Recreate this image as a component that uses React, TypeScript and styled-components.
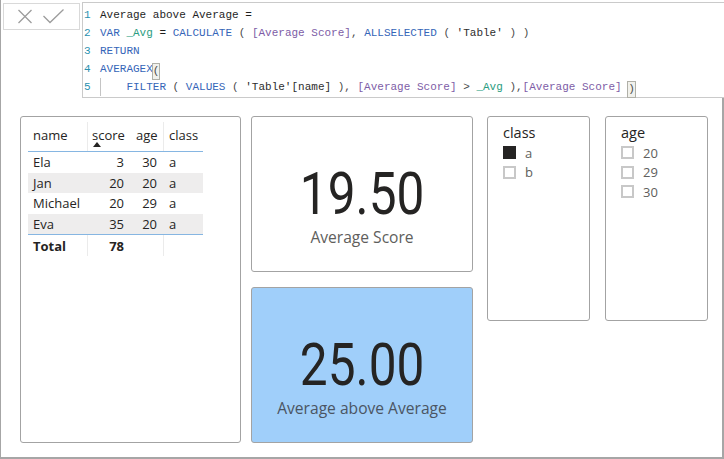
import React from "react";
import styled, { createGlobalStyle } from "styled-components";

const GlobalStyle = createGlobalStyle`
  html, body {
    margin: 0;
    padding: 0;
    background: #fff;
  }
  body {
    font-family: "Open Sans", "Noto Sans", sans-serif;
    color: #252423;
  }
`;

const Frame = styled.div`
  width: 724px;
  height: 459px;
  box-sizing: border-box;
  border-left: 1px solid #a6a6a6;
  display: flex;
  flex-direction: column;
  overflow: hidden;
`;

const FormulaBar = styled.div`
  height: 98px;
  flex-shrink: 0;
  display: flex;
  align-items: flex-start;
  padding-top: 2px;
  box-sizing: border-box;
`;

const ButtonBox = styled.div`
  margin: 1px 2px 0 2px;
  width: 77px;
  height: 27px;
  box-sizing: border-box;
  border: 1px solid #d9d9d9;
  display: flex;
  align-items: center;
  padding-left: 13px;
  gap: 10px;
`;

const Editor = styled.div`
  flex: 1;
  height: 96px;
  box-sizing: border-box;
  border: 1px solid #cacaca;
  border-right: none;
  padding-top: 3px;
  font-family: "Liberation Mono", "DejaVu Sans Mono", monospace;
  font-size: 11px;
  line-height: 18px;
  white-space: pre;
`;

const CodeLine = styled.div`
  height: 18px;
`;

const LineNo = styled.span`
  display: inline-block;
  width: 16px;
  padding-left: 1px;
  color: #2b91af;
`;

const colors: Record<string, string> = {
  plain: "#1e1e1e",
  kw: "#3565b8",
  v: "#2a9c80",
  m: "#7d5ca6",
  t: "#2d2d2d",
  p: "#4a4a4a",
};

const Tok = styled.span<{ $k: string }>`
  color: ${(p) => colors[p.$k]};
`;

const Match = styled.span`
  display: inline-block;
  height: 15px;
  line-height: 15px;
  vertical-align: -2px;
  outline: 1px solid #b0b0a8;
  background: #f1f1ec;
  color: #4a4a4a;
`;

const IndentGuide = styled.span`
  display: inline-block;
  width: 26.4px;
  height: 18px;
  vertical-align: top;
  box-sizing: border-box;
  border-left: 1px solid #c4c4c4;
`;

const Canvas = styled.div`
  flex: 1;
  box-sizing: border-box;
  border-right: 2px solid #a6a6a6;
  border-bottom: 2px solid #a6a6a6;
  padding: 18px 0 0 19px;
  display: flex;
  align-items: flex-start;
`;

const Visual = styled.div<{ $w: number; $h: number; $bg?: string }>`
  width: ${(p) => p.$w}px;
  height: ${(p) => p.$h}px;
  flex-shrink: 0;
  box-sizing: border-box;
  border: 1px solid #a3a3a3;
  border-radius: 3px;
  background: ${(p) => p.$bg || "#fff"};
`;

const TableVisual = styled(Visual)`
  padding: 5px 0 0 7px;
  margin-right: 10px;
`;

const Grid = styled.div`
  width: 175px;
  font-size: 13px;
  color: #252423;
`;

const Row = styled.div<{ $h: number; $bg?: string; $line?: boolean }>`
  display: grid;
  grid-template-columns: 59px 43px 33px 40px;
  height: ${(p) => p.$h}px;
  background: ${(p) => p.$bg || "transparent"};
  border-bottom: ${(p) => (p.$line ? "1px solid #86b6e2" : "none")};
`;

const Cell = styled.div<{ $right?: boolean; $sep?: boolean; $bold?: boolean; $pl?: number }>`
  position: relative;
  display: flex;
  align-items: center;
  justify-content: ${(p) => (p.$right ? "flex-end" : "flex-start")};
  padding: 0 ${(p) => (p.$right ? 6 : 0)}px 0 ${(p) => p.$pl ?? 5}px;
  border-left: ${(p) => (p.$sep ? "1px solid #ebebeb" : "none")};
  font-weight: ${(p) => (p.$bold ? 700 : 400)};
  white-space: nowrap;
`;

const HeadCell = styled(Cell)`
  align-items: flex-start;
  padding-top: 4px;
  line-height: 18px;
`;

const SortArrow = styled.span`
  position: absolute;
  left: 5px;
  top: 20px;
  width: 0;
  height: 0;
  border-left: 4px solid transparent;
  border-right: 4px solid transparent;
  border-bottom: 5px solid #252423;
`;

const CardColumn = styled.div`
  display: flex;
  flex-direction: column;
  gap: 15px;
  margin-right: 14px;
  flex-shrink: 0;
`;

const Card = styled(Visual)`
  display: flex;
  flex-direction: column;
  align-items: center;
  padding-top: 47px;
  gap: 4px;
`;

const BigNumber = styled.div`
  font-family: Roboto, "DejaVu Sans", sans-serif;
  font-size: 59px;
  line-height: 59px;
  color: #252423;
  transform: scaleX(0.84);
`;

const CardLabel = styled.div<{ $dark?: boolean }>`
  font-size: 15.6px;
  line-height: 20px;
  color: ${(p) => (p.$dark ? "#4b5563" : "#605e5c")};
`;

const Slicer = styled(Visual)`
  padding: 6px 0 0 15px;
  margin-right: 15px;
`;

const SlicerTitle = styled.div`
  font-size: 14.5px;
  line-height: 20px;
  color: #252423;
`;

const SlicerItem = styled.div`
  display: flex;
  align-items: center;
  gap: 9px;
  height: 19.5px;
  font-size: 13px;
  color: #605e5c;
`;

const Box = styled.span<{ $on?: boolean }>`
  width: 13px;
  height: 13px;
  box-sizing: border-box;
  border: 2px solid ${(p) => (p.$on ? "#252423" : "#c8c8c8")};
  background: ${(p) => (p.$on ? "#252423" : "#fff")};
`;

const rows = [
  { name: "Ela", score: "3", age: "30", cls: "a" },
  { name: "Jan", score: "20", age: "20", cls: "a" },
  { name: "Michael", score: "20", age: "29", cls: "a" },
  { name: "Eva", score: "35", age: "20", cls: "a" },
];

const App: React.FC = () => {
  return (
    <Frame>
      <GlobalStyle />
      <FormulaBar>
        <ButtonBox>
          <svg width="16" height="15" viewBox="0 0 16 15">
            <path d="M1.5 1 L14.5 14 M14.5 1 L1.5 14" stroke="#9c9c9c" strokeWidth="1.3" fill="none" />
          </svg>
          <svg width="21" height="15" viewBox="0 0 21 15">
            <path d="M0.5 7 L7 13.5 L20.5 0.5" stroke="#9c9c9c" strokeWidth="1.3" fill="none" />
          </svg>
        </ButtonBox>
        <Editor>
          <CodeLine>
            <LineNo>1</LineNo>
            <Tok $k="plain">Average above Average =</Tok>
          </CodeLine>
          <CodeLine>
            <LineNo>2</LineNo>
            <Tok $k="kw">VAR</Tok>{" "}<Tok $k="v">_Avg</Tok>{" "}<Tok $k="plain">=</Tok>{" "}
            <Tok $k="kw">CALCULATE</Tok>{" "}<Tok $k="p">(</Tok>{" "}<Tok $k="m">[Average Score]</Tok>
            <Tok $k="p">,</Tok>{" "}<Tok $k="kw">ALLSELECTED</Tok>{" "}<Tok $k="p">(</Tok>{" "}
            <Tok $k="t">'Table'</Tok>{" "}<Tok $k="p">)</Tok>{" "}<Tok $k="p">)</Tok>
          </CodeLine>
          <CodeLine>
            <LineNo>3</LineNo>
            <Tok $k="kw">RETURN</Tok>
          </CodeLine>
          <CodeLine>
            <LineNo>4</LineNo>
            <Tok $k="kw">AVERAGEX</Tok>
            <Match>(</Match>
          </CodeLine>
          <CodeLine>
            <LineNo>5</LineNo>
            <IndentGuide />
            <Tok $k="kw">FILTER</Tok>{" "}<Tok $k="p">(</Tok>{" "}<Tok $k="kw">VALUES</Tok>{" "}
            <Tok $k="p">(</Tok>{" "}<Tok $k="t">'Table'[name]</Tok>{" "}<Tok $k="p">),</Tok>{" "}
            <Tok $k="m">[Average Score]</Tok>{" "}<Tok $k="p">&gt;</Tok>{" "}<Tok $k="v">_Avg</Tok>{" "}
            <Tok $k="p">),</Tok>
            <Tok $k="m">[Average Score]</Tok>{" "}<Match>)</Match>
          </CodeLine>
        </Editor>
      </FormulaBar>

      <Canvas>
        <TableVisual $w={221} $h={327}>
          <Grid>
            <Row $h={29} $line>
              <HeadCell>name</HeadCell>
              <HeadCell $sep $pl={4}>
                score
                <SortArrow />
              </HeadCell>
              <HeadCell $pl={6}>age</HeadCell>
              <HeadCell $sep $pl={5}>class</HeadCell>
            </Row>
            {rows.map((r, i) => (
              <Row key={r.name} $h={20.5} $bg={i % 2 ? "#eeeded" : undefined} $line={i === rows.length - 1}>
                <Cell>{r.name}</Cell>
                <Cell $right>{r.score}</Cell>
                <Cell $right $pl={0}>
                  {r.age}
                </Cell>
                <Cell $pl={6}>{r.cls}</Cell>
              </Row>
            ))}
            <Row $h={21}>
              <Cell $bold>Total</Cell>
              <Cell $right $sep $bold>
                78
              </Cell>
              <Cell />
              <Cell $sep />
            </Row>
          </Grid>
        </TableVisual>

        <CardColumn>
          <Card $w={222} $h={156}>
            <BigNumber>19.50</BigNumber>
            <CardLabel>Average Score</CardLabel>
          </Card>
          <Card $w={222} $h={156} $bg="#a0cffa">
            <BigNumber>25.00</BigNumber>
            <CardLabel $dark>Average above Average</CardLabel>
          </Card>
        </CardColumn>

        <Slicer $w={103} $h={205}>
          <SlicerTitle>class</SlicerTitle>
          <SlicerItem>
            <Box $on />a
          </SlicerItem>
          <SlicerItem>
            <Box />b
          </SlicerItem>
        </Slicer>
        <Slicer $w={103} $h={205}>
          <SlicerTitle>age</SlicerTitle>
          {["20", "29", "30"].map((a) => (
            <SlicerItem key={a}>
              <Box />
              {a}
            </SlicerItem>
          ))}
        </Slicer>
      </Canvas>
    </Frame>
  );
};

export default App;
